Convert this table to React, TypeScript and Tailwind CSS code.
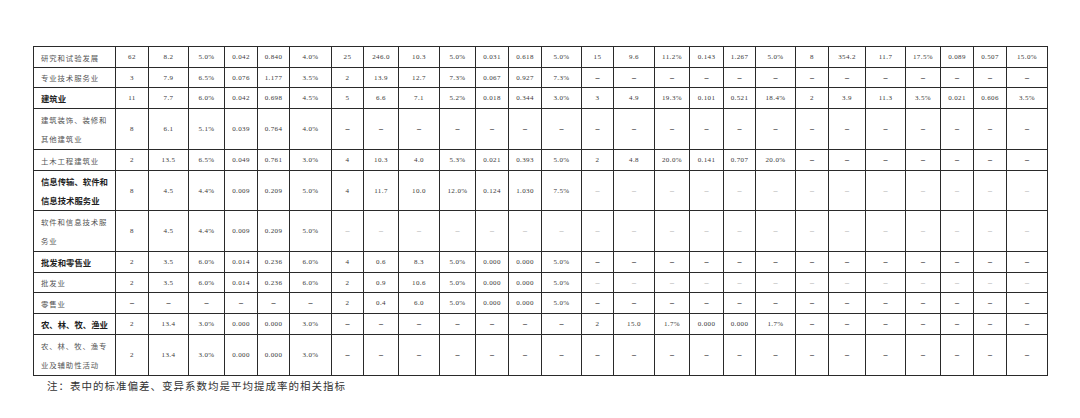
import React from "react";

type Row = {
    label: string[];
    bold?: boolean;
    height: string;
    values: string[];
    lightDash?: boolean;
};

const colWidths = [
    "w-[82px]", "w-[33px]", "w-[40px]", "w-[36px]", "w-[33px]", "w-[32px]", "w-[42px]",
    "w-[32px]", "w-[35px]", "w-[41px]", "w-[36px]", "w-[33px]", "w-[33px]", "w-[40px]",
    "w-[32px]", "w-[41px]", "w-[35px]", "w-[34px]", "w-[32px]", "w-[40px]",
    "w-[33px]", "w-[37px]", "w-[40px]", "w-[35px]", "w-[33px]", "w-[33px]", "w-[41px]",
];

const dashes = (n: number) => Array.from({ length: n }, () => "–");

const rows: Row[] = [
    {
        label: ["研究和试验发展"],
        height: "h-[21px]",
        values: ["62", "8.2", "5.0%", "0.042", "0.840", "4.0%", "25", "246.0", "10.3", "5.0%", "0.031", "0.618", "5.0%", "15", "9.6", "11.2%", "0.143", "1.267", "5.0%", "8", "354.2", "11.7", "17.5%", "0.089", "0.507", "15.0%"],
    },
    {
        label: ["专业技术服务业"],
        height: "h-[20px]",
        values: ["3", "7.9", "6.5%", "0.076", "1.177", "3.5%", "2", "13.9", "12.7", "7.3%", "0.067", "0.927", "7.3%", ...dashes(13)],
    },
    {
        label: ["建筑业"],
        bold: true,
        height: "h-[21px]",
        values: ["11", "7.7", "6.0%", "0.042", "0.698", "4.5%", "5", "6.6", "7.1", "5.2%", "0.018", "0.344", "3.0%", "3", "4.9", "19.3%", "0.101", "0.521", "18.4%", "2", "3.9", "11.3", "3.5%", "0.021", "0.606", "3.5%"],
    },
    {
        label: ["建筑装饰、装修和", "其他建筑业"],
        height: "h-[41px]",
        values: ["8", "6.1", "5.1%", "0.039", "0.764", "4.0%", ...dashes(20)],
    },
    {
        label: ["土木工程建筑业"],
        height: "h-[21px]",
        values: ["2", "13.5", "6.5%", "0.049", "0.761", "3.0%", "4", "10.3", "4.0", "5.3%", "0.021", "0.393", "5.0%", "2", "4.8", "20.0%", "0.141", "0.707", "20.0%", ...dashes(7)],
    },
    {
        label: ["信息传输、软件和", "信息技术服务业"],
        bold: true,
        height: "h-[40px]",
        lightDash: true,
        values: ["8", "4.5", "4.4%", "0.009", "0.209", "5.0%", "4", "11.7", "10.0", "12.0%", "0.124", "1.030", "7.5%", ...dashes(13)],
    },
    {
        label: ["软件和信息技术服", "务业"],
        height: "h-[41px]",
        lightDash: true,
        values: ["8", "4.5", "4.4%", "0.009", "0.209", "5.0%", ...dashes(20)],
    },
    {
        label: ["批发和零售业"],
        bold: true,
        height: "h-[21px]",
        values: ["2", "3.5", "6.0%", "0.014", "0.236", "6.0%", "4", "0.6", "8.3", "5.0%", "0.000", "0.000", "5.0%", ...dashes(13)],
    },
    {
        label: ["批发业"],
        height: "h-[20px]",
        lightDash: true,
        values: ["2", "3.5", "6.0%", "0.014", "0.236", "6.0%", "2", "0.9", "10.6", "5.0%", "0.000", "0.000", "5.0%", ...dashes(13)],
    },
    {
        label: ["零售业"],
        height: "h-[21px]",
        values: [...dashes(6), "2", "0.4", "6.0", "5.0%", "0.000", "0.000", "5.0%", ...dashes(13)],
    },
    {
        label: ["农、林、牧、渔业"],
        bold: true,
        height: "h-[21px]",
        values: ["2", "13.4", "3.0%", "0.000", "0.000", "3.0%", ...dashes(7), "2", "15.0", "1.7%", "0.000", "0.000", "1.7%", ...dashes(7)],
    },
    {
        label: ["农、林、牧、渔专", "业及辅助性活动"],
        height: "h-[41px]",
        values: ["2", "13.4", "3.0%", "0.000", "0.000", "3.0%", ...dashes(20)],
    },
];

const App: React.FC = () => {
    return (
        <div className="w-[1080px] h-[418px] bg-white overflow-hidden pt-[46px] pl-[33px] antialiased">
            <table className="table-fixed border-collapse w-[1014px]">
                <colgroup>
                    {colWidths.map((w, i) => (
                        <col key={i} className={w} />
                    ))}
                </colgroup>
                <tbody>
                    {rows.map((row, ri) => (
                        <tr key={ri} className={row.height}>
                            {/* Industry name */}
                            <td
                                className={
                                    row.bold
                                        ? "border border-[#2a2a2a] pl-[7px] pr-0 py-0 text-left align-middle font-['Noto_Sans_CJK_SC',sans-serif] text-[8.4px] leading-[19px] font-bold text-[#1f1f1f] whitespace-nowrap"
                                        : "border border-[#2a2a2a] pl-[7px] pr-0 py-0 text-left align-middle font-['Noto_Sans_CJK_SC',sans-serif] text-[7.4px] leading-[19px] tracking-[0.9px] text-[#555] whitespace-nowrap"
                                }
                            >
                                {row.label.map((line, li) => (
                                    <div key={li}>{line}</div>
                                ))}
                            </td>
                            {row.values.map((v, ci) => (
                                <td
                                    key={ci}
                                    className={
                                        v === "–"
                                            ? row.lightDash
                                                ? "border border-[#2a2a2a] p-0 text-center align-middle font-['Liberation_Serif',serif] text-[8px] leading-[10px] text-[#9a9a9a]"
                                                : "border border-[#2a2a2a] p-0 text-center align-middle font-['Liberation_Serif',serif] text-[8px] leading-[10px] font-bold text-[#333]"
                                            : "border border-[#2a2a2a] p-0 text-center align-middle font-['Liberation_Serif',serif] text-[7px] leading-[10px] tracking-[0.4px] text-[#3a3a3a] whitespace-nowrap"
                                    }
                                >
                                    {v}
                                </td>
                            ))}
                        </tr>
                    ))}
                </tbody>
            </table>
            <p className="mt-[2px] pl-[14px] font-['Noto_Sans_CJK_SC',sans-serif] text-[10.5px] leading-[16px] tracking-[1px] text-[#333]">
                注：表中的标准偏差、变异系数均是平均提成率的相关指标
            </p>
        </div>
    );
};

export default App;
